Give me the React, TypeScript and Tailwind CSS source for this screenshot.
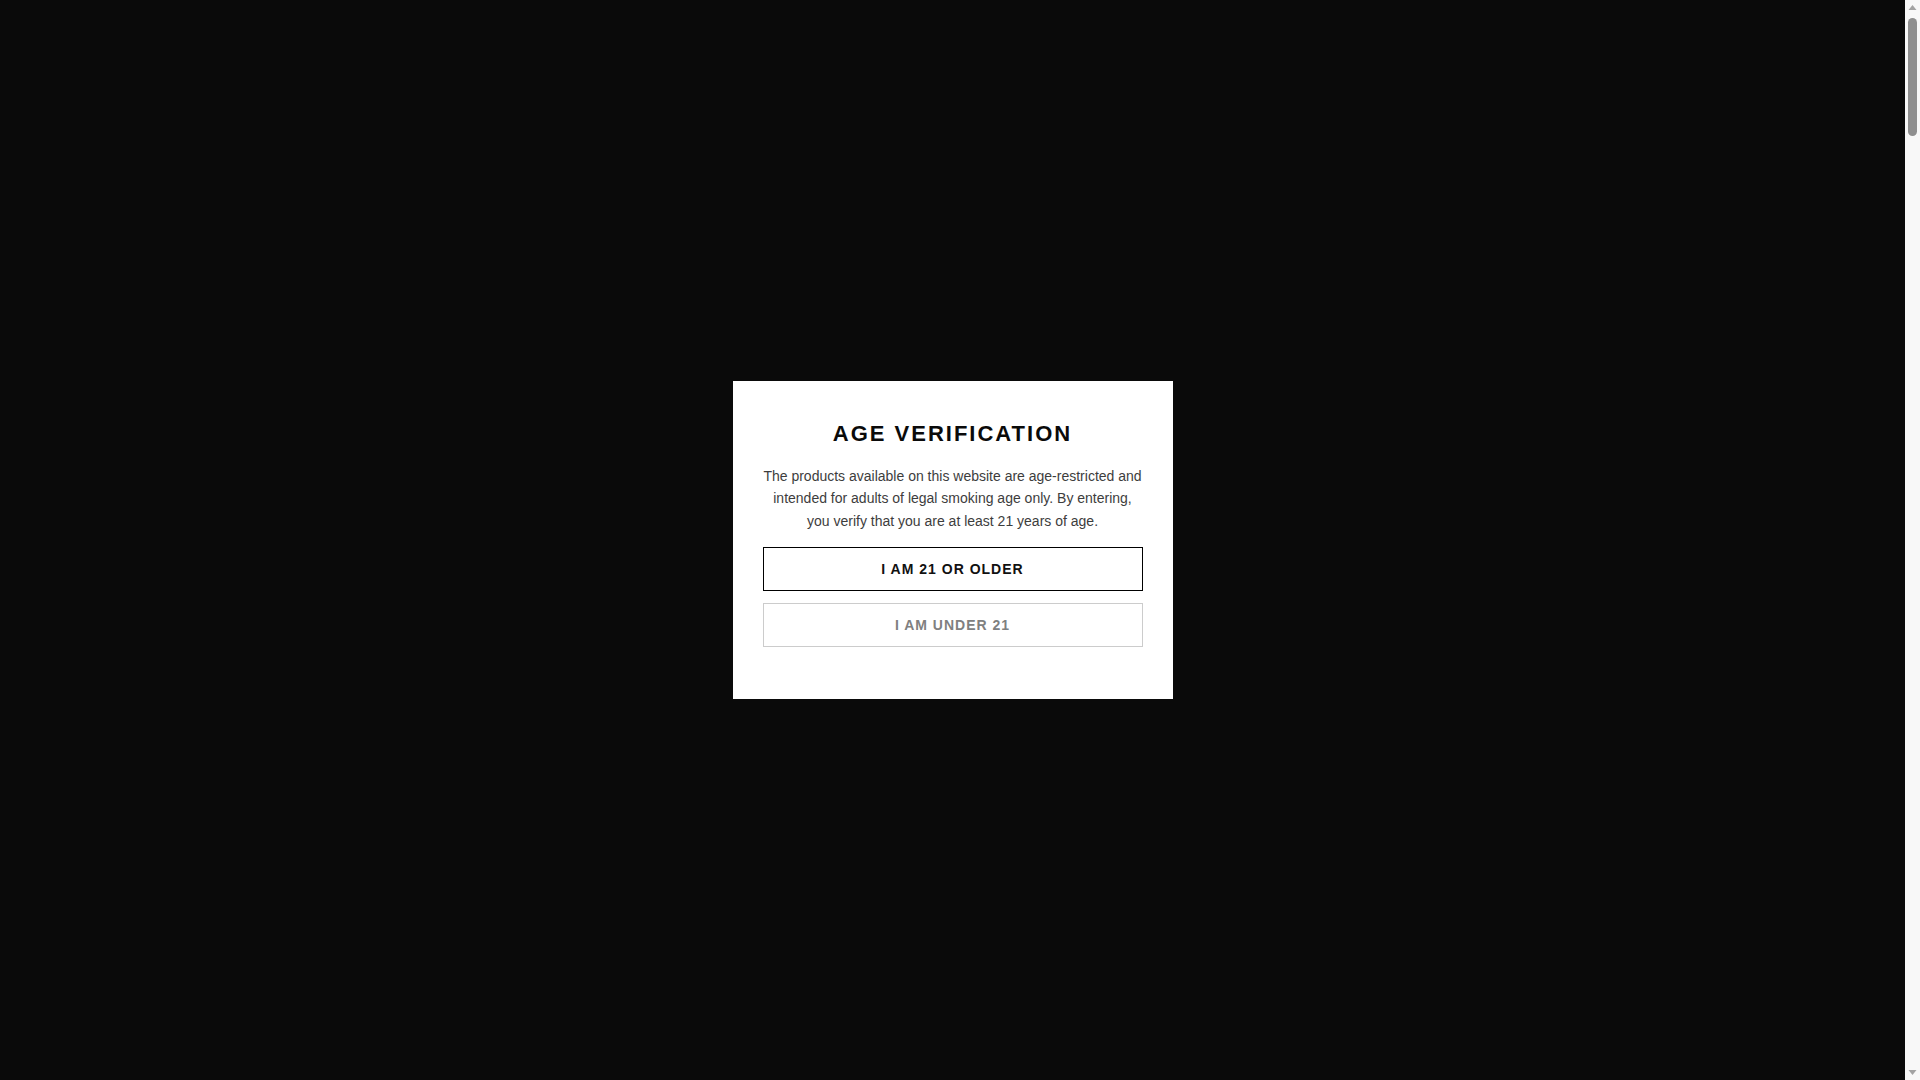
import React from 'react';

const Scrollbar: React.FC = () => (
  <div className="flex h-full w-[15px] shrink-0 flex-col items-center bg-[#f8f8f8]">
    <svg width="15" height="15" viewBox="0 0 15 15" className="shrink-0">
      <polygon points="3.5,10 7.5,5 11.5,10" fill="#a3a3a3" />
    </svg>
    <div className="mt-[3px] h-[118px] w-[9px] rounded-full bg-[#8f8f8f]" />
    <div className="flex-1" />
    <svg width="15" height="15" viewBox="0 0 15 15" className="shrink-0">
      <polygon points="3.5,5 11.5,5 7.5,10" fill="#a3a3a3" />
    </svg>
  </div>
);

const App: React.FC = () => {
  return (
    <div className="flex h-screen bg-[#0a0a0a] font-['Liberation_Sans',Arial,sans-serif]">
      <main className="flex flex-1 items-center justify-center">
        <div className="w-[440px] bg-white px-[30px] pt-[40px] pb-[52px] text-center">
          <h2 className="text-[22px] leading-[1.2] font-bold tracking-[2px] text-[#0a0a0a]">
            AGE VERIFICATION
          </h2>
          <p className="mt-[18px] text-[14px] leading-[22.4px] text-[#3d3d3d]">
            The products available on this website are age-restricted and intended for adults of legal
            smoking age only. By entering, you verify that you are at least 21 years of age.
          </p>
          <button className="mt-[15px] flex h-[44px] w-full items-center justify-center border border-black bg-white text-[14px] font-bold tracking-[1px] text-[#111]">
            I AM 21 OR OLDER
          </button>
          <button className="mt-[12px] flex h-[44px] w-full items-center justify-center border border-[#cccccc] bg-white text-[14px] font-bold tracking-[1px] text-[#808080]">
            I AM UNDER 21
          </button>
        </div>
      </main>
      <Scrollbar />
    </div>
  );
};

export default App;
